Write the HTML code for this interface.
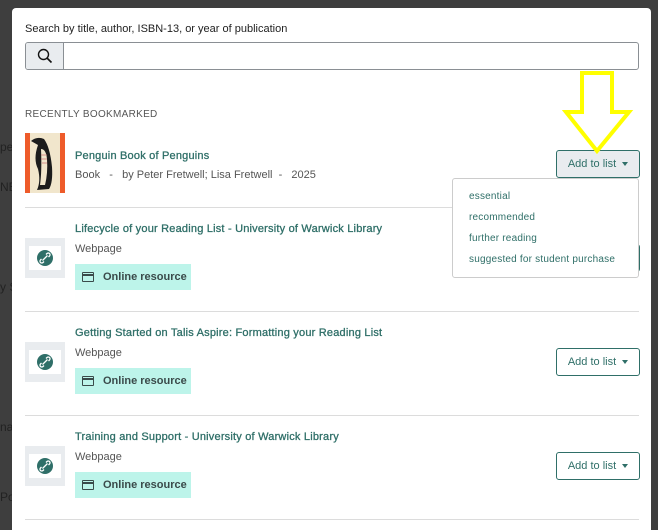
<!DOCTYPE html>
<html><head><meta charset="utf-8"><style>
*{box-sizing:border-box;margin:0;padding:0}
html,body{width:658px;height:530px;overflow:hidden}
body{background:#3e3e3e;font-family:"Liberation Sans",sans-serif;position:relative}
.bg{position:absolute;color:#222;font-size:12px}
.modal{position:absolute;left:12px;top:8px;width:639px;height:522px;background:#fff;border-radius:4px 4px 0 0;overflow:hidden}
.a{position:absolute}
.lbl{font-size:11px;color:#222}
.title{font-size:11px;color:#2f6f68;font-weight:normal;-webkit-text-stroke:0.3px #2f6f68;letter-spacing:.2px}
.meta{font-size:11px;color:#555}
.div{position:absolute;left:13px;width:614px;height:1px;background:#dcdcdc}
.btn{position:absolute;left:544px;width:84px;height:28px;border:1.5px solid #2f6f68;border-radius:3px;font-size:11px;color:#2f6f68;display:flex;align-items:center;justify-content:center;gap:6px}
.caret{width:0;height:0;border-left:3.5px solid transparent;border-right:3.5px solid transparent;border-top:4px solid #2f6f68}
.badge{position:absolute;left:63px;width:116px;height:26px;background:#bdf4ea;font-size:11px;font-weight:bold;color:#3a4a4a;display:flex;align-items:center;padding-left:7px;gap:9px}
.card{width:12px;height:10px;border:1.5px solid #3a4a4a;border-radius:1px;position:relative}
.card:after{content:"";position:absolute;left:0;right:0;top:1px;height:2px;background:#3a4a4a}
.ib{position:absolute;left:13px;width:40px;height:40px;background:#e9ecef}
.ib div{position:absolute;left:4px;top:8px;width:32px;height:24px;background:#fff}
.ib svg{position:absolute;left:9px;top:5px}
.dd a{display:block;font-size:10px;color:#2f6f68;text-decoration:none;height:21px;line-height:21px;letter-spacing:.2px}
</style></head><body>
<div class="bg" style="left:0;top:140px">pe</div>
<div class="bg" style="left:0;top:180px">NE</div>
<div class="bg" style="left:0;top:280px">y S</div>
<div class="bg" style="left:0;top:420px">na</div>
<div class="bg" style="left:0;top:490px">Po</div>
<div class="modal">
<div class="a lbl" style="left:13px;top:15px">Search by title, author, ISBN-13, or year of publication</div>
<div class="a" style="left:13px;top:34px;width:614px;height:28px;border:1px solid #8a8f94;border-radius:3px;overflow:hidden">
 <div style="width:38px;height:100%;background:#e9ecef;border-right:1px solid #8a8f94;position:relative">
 <svg width="16" height="16" style="position:absolute;left:11px;top:5px" viewBox="0 0 16 16"><circle cx="6.5" cy="6.5" r="5" fill="none" stroke="#111" stroke-width="1.4"/><path d="M10 10l4.5 4.5" stroke="#111" stroke-width="1.6"/></svg></div>
</div>
<div class="a" style="left:13px;top:101px;font-size:10px;color:#555;letter-spacing:.3px">RECENTLY BOOKMARKED</div>
<div class="a" style="left:13px;top:125px;width:40px;height:60px;background:#ee5b2a">
 <div style="position:absolute;left:5px;top:0;width:30px;height:60px;background:#f1e6cc"></div>
 <svg width="40" height="60" style="position:absolute;left:0;top:0" viewBox="0 0 40 60"><path d="M6 8 Q12 3 19 6 Q25 14 27 34 Q28 50 24 56 L12 57 Q16 48 13 36 Q8 26 13 12 Z" fill="#1c1c1c"/><path d="M16 16 Q21 16 22 26 Q23 40 20 52 L15 52 Q17 38 16 16Z" fill="#f1e6cc"/><path d="M16 22h6M16 26h6M17 30h5" stroke="#c77" stroke-width=".8"/></svg>
</div>
<div class="a title" style="left:63px;top:142px">Penguin Book of Penguins</div>
<div class="a meta" style="left:63px;top:161px">Book &nbsp;&nbsp;-&nbsp;&nbsp; by Peter Fretwell; Lisa Fretwell &nbsp;-&nbsp;&nbsp; 2025</div>
<div class="btn" style="top:142px;background:#e9ecef">Add to list <span class="caret"></span></div>
<div class="div" style="top:199px"></div>

<div class="a title" style="left:63px;top:215px">Lifecycle of your Reading List - University of Warwick Library</div>
<div class="a meta" style="left:63px;top:235px">Webpage</div>
<div class="ib" style="top:230px"><div></div><svg width="22" height="22" viewBox="0 0 22 22" style="left:9px;top:9px"><circle cx="11" cy="11" r="8" fill="#2f6f68"/><path d="M8.5 13.5l5-5M7.5 12l-1 1a1.6 1.6 0 002.5 2.5l1-1M14.5 10l1-1a1.6 1.6 0 00-2.5-2.5l-1 1" stroke="#fff" stroke-width="1.3" fill="none"/></svg></div>
<div class="badge" style="top:256px"><span class="card"></span>Online resource</div>
<div class="div" style="top:303px"></div>

<div class="a title" style="left:63px;top:319px">Getting Started on Talis Aspire: Formatting your Reading List</div>
<div class="a meta" style="left:63px;top:339px">Webpage</div>
<div class="ib" style="top:334px"><div></div><svg width="22" height="22" viewBox="0 0 22 22" style="left:9px;top:9px"><circle cx="11" cy="11" r="8" fill="#2f6f68"/><path d="M8.5 13.5l5-5M7.5 12l-1 1a1.6 1.6 0 002.5 2.5l1-1M14.5 10l1-1a1.6 1.6 0 00-2.5-2.5l-1 1" stroke="#fff" stroke-width="1.3" fill="none"/></svg></div>
<div class="badge" style="top:360px"><span class="card"></span>Online resource</div>
<div class="btn" style="top:340px">Add to list <span class="caret"></span></div>
<div class="div" style="top:407px"></div>

<div class="a title" style="left:63px;top:423px">Training and Support - University of Warwick Library</div>
<div class="a meta" style="left:63px;top:443px">Webpage</div>
<div class="ib" style="top:438px"><div></div><svg width="22" height="22" viewBox="0 0 22 22" style="left:9px;top:9px"><circle cx="11" cy="11" r="8" fill="#2f6f68"/><path d="M8.5 13.5l5-5M7.5 12l-1 1a1.6 1.6 0 002.5 2.5l1-1M14.5 10l1-1a1.6 1.6 0 00-2.5-2.5l-1 1" stroke="#fff" stroke-width="1.3" fill="none"/></svg></div>
<div class="badge" style="top:464px"><span class="card"></span>Online resource</div>
<div class="btn" style="top:444px">Add to list <span class="caret"></span></div>
<div class="div" style="top:511px"></div>

<div class="btn" style="top:236px">Add to list <span class="caret"></span></div>
<div class="a dd" style="left:440px;top:170px;width:187px;height:100px;background:#fff;border:1px solid #ccc;border-radius:3px;padding:7px 16px">
<a>essential</a><a>recommended</a><a>further reading</a><a>suggested for student purchase</a></div>
</div>
<svg width="658" height="530" style="position:absolute;left:0;top:0"><path d="M582 73 H612 V112 H629 L597 151 L566 112 H582 Z" fill="none" stroke="#ffff00" stroke-width="4"/></svg>
</body></html>
